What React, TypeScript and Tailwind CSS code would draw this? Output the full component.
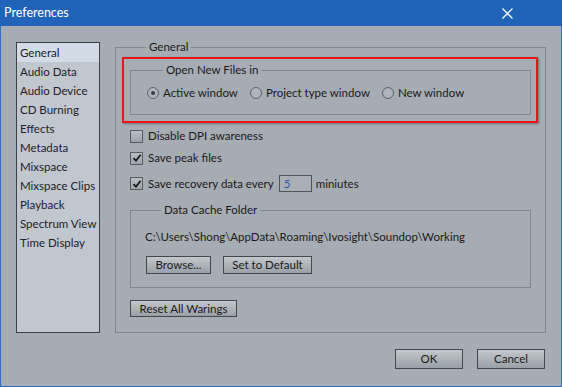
import React from "react";

const pages = [
  "General",
  "Audio Data",
  "Audio Device",
  "CD Burning",
  "Effects",
  "Metadata",
  "Mixspace",
  "Mixspace Clips",
  "Playback",
  "Spectrum View",
  "Time Display",
];

const font = "font-['Lato','Liberation_Sans',sans-serif]";

function Radio({ checked, label }: { checked?: boolean; label: string }) {
  return (
    <div className="flex items-center h-[16px]">
      <span className="w-[12px] h-[12px] rounded-full border border-[#5c6168] bg-[#aeb4bb] flex items-center justify-center">
        {checked && <span className="w-[4px] h-[4px] rounded-full bg-[#3a3e44]" />}
      </span>
      <span className="ml-[4px]">{label}</span>
    </div>
  );
}

function Check({ checked }: { checked?: boolean }) {
  return (
    <span className="w-[13px] h-[13px] border border-[#575c62] bg-gradient-to-b from-[#b8bec5] to-[#9ea4ab] flex items-center justify-center">
      {checked && (
        <svg width="10" height="10" viewBox="0 0 10 10">
          <path d="M1.5 5.2 L4 7.8 L8.6 1.8" fill="none" stroke="#141414" strokeWidth="1.7" />
        </svg>
      )}
    </span>
  );
}

function Btn({ label, className }: { label: string; className: string }) {
  return (
    <button
      className={`border border-[#44484d] bg-gradient-to-b from-[#c3c8ce] to-[#9aa0a7] text-[#1a1a1a] flex items-center justify-center leading-none whitespace-nowrap ${className}`}
    >
      {label}
    </button>
  );
}

export default function App() {
  return (
    <div
      className={`w-[562px] h-[387px] bg-[#a6acb3] border-x border-b border-[#2e70c5] flex flex-col text-[11.5px] text-[#1a1a1a] whitespace-nowrap ${font}`}
    >
      {/* title bar */}
      <div className="h-[26px] -mx-px bg-[#2163b8] flex items-center justify-between pl-[4px] pr-[49px] text-white text-[12.5px]">
        <span>Preferences</span>
        <svg width="11" height="11" viewBox="0 0 11 11">
          <path d="M0.5 0.5 L10.5 10.5 M10.5 0.5 L0.5 10.5" stroke="#ffffff" strokeWidth="1.3" />
        </svg>
      </div>

      <div className="flex items-start pl-[15px] pr-[15px] pt-[14px]">
        {/* page list */}
        <div className="mt-[2px] w-[85px] h-[291px] border border-[#3c4147] bg-[#c1c7ce] text-[#1d2030]">
          {pages.map((p, i) => (
            <div
              key={p}
              className={`h-[19px] pl-[3px] flex items-center ${i === 0 ? "bg-[#d2dbe6]" : ""}`}
            >
              {p}
            </div>
          ))}
        </div>

        {/* General group */}
        <fieldset className="ml-[15px] w-[430px] h-[293px] border border-[#80868d] px-[14px]">
          <legend className="ml-[16px] px-[3px] leading-[14px]">General</legend>

          <div className="relative mt-[9px] w-[401px]">
            <fieldset className="border border-[#80868d] pb-[13px] pl-[16px]">
              <legend className="ml-[16px] px-[3px] leading-[14px]">Open New Files in</legend>
              <div className="mt-[8px] flex items-center gap-[12px]">
                <Radio checked label="Active window" />
                <Radio label="Project type window" />
                <Radio label="New window" />
              </div>
            </fieldset>
            <div className="absolute -left-[8px] -right-[7px] -top-[6px] -bottom-[8px] border-2 border-[#e8151b] shadow-[1px_1px_2px_rgba(0,0,0,0.35)] pointer-events-none" />
          </div>

          <div className="mt-[13px] h-[16px] flex items-center">
            <Check />
            <span className="ml-[5px]">Disable DPI awareness</span>
          </div>
          <div className="mt-[6px] h-[16px] flex items-center">
            <Check checked />
            <span className="ml-[5px]">Save peak files</span>
          </div>
          <div className="mt-[9px] h-[17px] flex items-center">
            <Check checked />
            <span className="ml-[5px]">Save recovery data every</span>
            <span className="ml-[5px] w-[33px] h-[17px] border border-[#50555b] bg-[#a9afb6] text-[#2a5ab0] pl-[4px] flex items-center">
              5
            </span>
            <span className="ml-[4px]">miniutes</span>
          </div>

          <fieldset className="mt-[11px] w-[401px] border border-[#80868d] pb-[13px] pl-[14px]">
            <legend className="ml-[16px] px-[3px] leading-[14px]">Data Cache Folder</legend>
            <div className="mt-[12px] h-[16px] flex items-center">
              C:\Users\Shong\AppData\Roaming\Ivosight\Soundop\Working
            </div>
            <div className="mt-[11px] flex gap-[12px] pl-px">
              <Btn label="Browse..." className="w-[65px] h-[18px]" />
              <Btn label="Set to Default" className="w-[89px] h-[18px]" />
            </div>
          </fieldset>

          <Btn label="Reset All Warings" className="mt-[12px] w-[107px] h-[17px]" />
        </fieldset>
      </div>

      <div className="mt-[16px] flex justify-end gap-[14px] pr-[16px]">
        <Btn label="OK" className="w-[68px] h-[20px]" />
        <Btn label="Cancel" className="w-[68px] h-[20px]" />
      </div>
    </div>
  );
}
